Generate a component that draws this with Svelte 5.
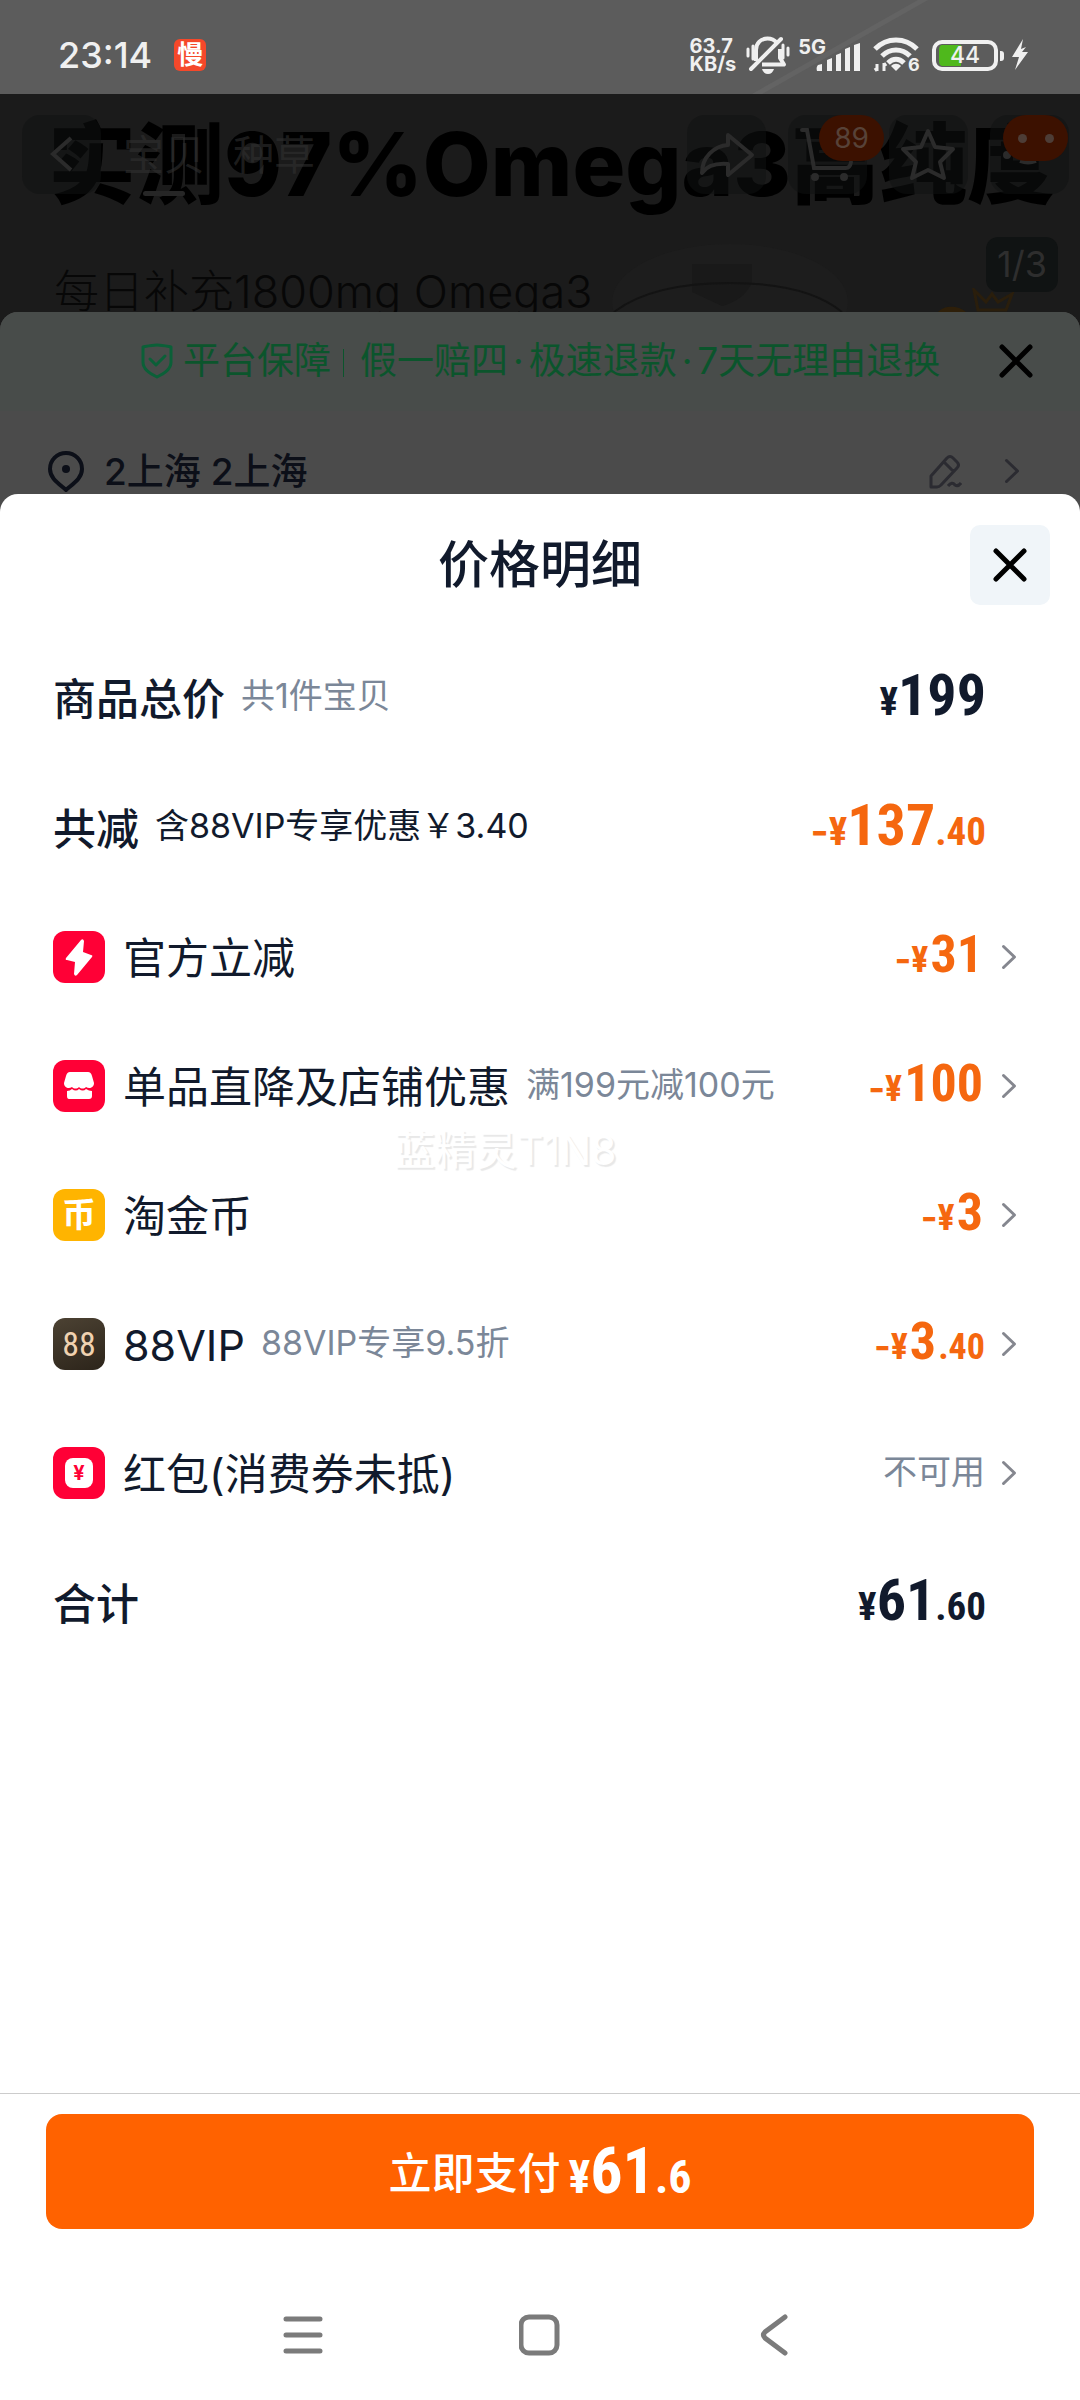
<script lang="ts">
	type Item = {
		icon: 'flash' | 'shop' | 'coin' | 'vip' | 'packet';
		title: string;
		note?: string;
		whole?: string;
		cents?: string;
		unavailable?: string;
	};

	const items: Item[] = [
		{ icon: 'flash', title: '官方立减', whole: '31' },
		{ icon: 'shop', title: '单品直降及店铺优惠', note: '满199元减100元', whole: '100' },
		{ icon: 'coin', title: '淘金币', whole: '3' },
		{ icon: 'vip', title: '88VIP', note: '88VIP专享9.5折', whole: '3', cents: '.40' },
		{ icon: 'packet', title: '红包(消费券未抵)', unavailable: '不可用' }
	];
</script>

{#snippet chevron()}
	<svg class="chevron" viewBox="0 0 16 26" width="16" height="26" aria-hidden="true">
		<path d="M2.5 2.5 13.5 13 2.5 23.5" />
	</svg>
{/snippet}

{#snippet cross()}
	<svg class="cross" viewBox="0 0 36 36" width="36" height="36" aria-hidden="true">
		<path d="M4 4 32 32M32 4 4 32" />
	</svg>
{/snippet}

{#snippet amount(whole: string, cents = '', minus = false)}
	<span class="amount">
		{#if minus}<span class="minus">-</span>{/if}<span class="yen">¥</span><span class="whole"
			>{whole}</span
		>{#if cents}<span class="cents">{cents}</span>{/if}
	</span>
{/snippet}

<div class="page">
	<header class="status">
		<svg class="streak" viewBox="0 0 200 94" width="200" height="94" aria-hidden="true">
			<path d="M10 98 190 -4" />
		</svg>
		<time>23:14</time>
		<span class="app">慢</span>
		<span class="spacer"></span>
		<span class="speed">63.7<br />KB/s</span>
		<svg class="bell" viewBox="0 0 44 38" width="44" height="38" aria-hidden="true">
			<g fill="none" stroke="#f0f0f0" stroke-width="4">
				<path d="M10 25V14C10 7 15 2.500 21.500 2.500c4 0 7 1.500 9 4" />
				<path d="M34 13v9l4 6.500H16" stroke-linejoin="round" />
				<path d="M5 33 35 3" stroke-linecap="round" />
				<path d="M2 13v7M7 10v13M37 9v13M42 12v7" stroke-width="3" stroke-linecap="round" />
			</g>
			<path d="M16 33h12c-1 3-3 5-6 5s-5-2-6-5Z" fill="#f0f0f0" />
		</svg>
		<span class="cell">
			<b>5G</b>
			<svg viewBox="0 0 44 28" width="44" height="28" aria-hidden="true">
				<path
					fill="#f0f0f0"
					d="M2 22l4-1v7H1c-1-3 0-5 1-6ZM11 17l5-2v13h-5ZM20 12l5-2v18h-5ZM29 6l5-2v24h-5ZM38 2l6-2v28h-6Z"
				/>
			</svg>
		</span>
		<svg class="wifi" viewBox="0 0 48 36" width="48" height="36" aria-hidden="true">
			<g fill="none" stroke="#f0f0f0" stroke-width="5">
				<path d="M2 12C14 0 32 0 44 12" />
				<path d="M9 19c8-8 20-8 28 0" />
				<path d="M15 26c5-5 11-5 16 0" />
				<path d="M4 34v-7M11 26v8M2 31l2 3M13 29l-2-3" stroke-width="3" />
			</g>
			<path d="m23 34-5-5c3-3 7-3 10 0Z" fill="#f0f0f0" />
			<text x="35" y="34" font-size="18">6</text>
		</svg>
		<span class="battery"><span>44</span></span>
		<svg class="bolt" viewBox="0 0 18 32" width="18" height="32" aria-hidden="true">
			<path d="M12 0 1 18h7L4 31 17 13h-6l4-5-5 2Z" fill="#f0f0f0" />
		</svg>
	</header>

	<main>
		<section class="hero">
			<svg class="bottle" viewBox="0 0 240 72" width="240" height="72" aria-hidden="true">
				<ellipse cx="120" cy="62" rx="118" ry="58" fill="#1d1d1d" />
				<path d="M82 24h60v18c-6 14-16 20-30 24l-30-14Z" fill="#191919" />
				<path d="M4 72C30 52 70 43 120 43s88 9 112 29" fill="none" stroke="#131313" stroke-width="2" />
			</svg>
			<svg class="crown" viewBox="0 0 80 24" width="80" height="24" aria-hidden="true">
				<path d="M0 24c6-7 20-7 28 0Z" fill="#2e1f09" />
				<path d="m36 2 4 20h28l6-16-14 8-6-8-6 8Z" fill="none" stroke="#2a1e0c" stroke-width="3" />
			</svg>
			<h2>实测97%Omega3高纯度</h2>
			<p>每日补充1800mg Omega3</p>
			<nav class="tools">
				<button class="tool" aria-label="返回">
					<svg viewBox="0 0 79 79" width="79" height="79"><path d="M49 23 31 39 49 55" /></svg>
				</button>
				<a class="tab current" href="#item">宝贝</a>
				<a class="tab" href="#posts">种草</a>
				<span class="spacer"></span>
				<button class="tool" aria-label="分享">
					<svg viewBox="0 0 79 79" width="79" height="79">
						<path
							d="M41 20 65 40 41 60V49C28 48 19 52 15 58 15 42 27 31 41 30Z"
							stroke-linejoin="round"
						/>
					</svg>
				</button>
				<button class="tool" aria-label="购物车">
					<svg viewBox="0 0 79 79" width="79" height="79">
						<path d="M14 15h5l7 38h32q4 0 5-6" stroke-linecap="round" />
						<circle cx="27" cy="62" r="2" /><circle cx="56" cy="62" r="2" />
					</svg>
					<span class="badge">89</span>
				</button>
				<button class="tool" aria-label="收藏">
					<svg viewBox="0 0 79 79" width="79" height="79">
						<path
							d="m39 16 7 16 18 2-13 13 4 16-16-8-16 8 4-16-13-13 18-2Z"
							stroke-linejoin="round"
						/>
					</svg>
				</button>
				<button class="tool" aria-label="更多">
					<svg viewBox="0 0 79 79" width="79" height="79">
						<circle class="dot" cx="17" cy="40" r="2" />
						<path d="M30 46q8 3 16 0" />
					</svg>
					<span class="badge dots"><i></i><i></i></span>
				</button>
			</nav>
			<span class="pager">1/3</span>
		</section>

		<section class="order">
			<div class="promise">
				<p>
					<svg viewBox="0 0 32 36" width="32" height="36" aria-hidden="true">
						<path d="M16 2c5 0 9 1 14 2v15c0 7-6 11-14 15C8 30 2 26 2 19V4c5-1 9-2 14-2Z" />
						<path d="m9 16 6 6 9-9" />
					</svg>
					<span>平台保障</span>
					<i></i>
					<span>假一赔四<b>·</b>极速退款<b>·</b>7天无理由退换</span>
				</p>
				<button aria-label="关闭订单">{@render cross()}</button>
			</div>
			<div class="address">
				<svg viewBox="0 0 38 42" width="38" height="42" aria-hidden="true">
					<path
						d="M19 3C10 3 3 10 3 19c0 9 8 14 16 21 8-7 16-12 16-21 0-9-7-16-16-16Z"
						fill="none"
						stroke="#0c0f18"
						stroke-width="4"
					/>
					<circle cx="19" cy="19" r="4" fill="#0c0f18" />
				</svg>
				<strong>2上海 2上海</strong>
				<button aria-label="修改地址">
					<svg viewBox="0 0 34 36" width="34" height="36">
						<path
							d="M3 23 19 5q3-3 6 0l4 4q3 3 0 6L13 32q-2 2-4 2H3Zm13-14 9 9M20 33q4-5 7-1 3 2 6-2"
							fill="none"
							stroke="#2b2b31"
							stroke-width="3"
							stroke-linejoin="round"
						/>
					</svg>
				</button>
				{@render chevron()}
			</div>
		</section>

		<section class="detail">
			<header>
				<h1>价格明细</h1>
				<button aria-label="关闭">{@render cross()}</button>
			</header>

			<div class="list">
				<div class="row sum">
					<strong>商品总价</strong>
					<small>共1件宝贝</small>
					{@render amount('199')}
				</div>
				<div class="row sum off">
					<strong>共减</strong>
					<small class="dark">含88VIP专享优惠￥3.40</small>
					{@render amount('137', '.40', true)}
				</div>

				{#each items as item}
					<button class="row item off">
						<span class="icon {item.icon}">
							{#if item.icon === 'flash'}
								<svg viewBox="0 0 52 52" width="52" height="52">
									<path
										d="M28 9 13 27q-1 2 1 2l8 2-1 12q1 3 3 1l15-18q1-2-1-2l-8-3 1-11q-1-3-3-1Z"
										fill="#fff"
									/>
								</svg>
							{:else if item.icon === 'shop'}
								<svg viewBox="0 0 52 52" width="52" height="52">
									<path
										d="M17 12h18q3 0 4 4l2 7c0 5-5 6-8 4-2 2-5 2-7 0-2 2-5 2-7 0-3 2-8 1-8-4l2-7q1-4 4-4Z"
										fill="#fff"
									/>
									<path
										d="M14 31q3 0 5-2 4 3 7 0 4 3 7 0 3 2 6 2v5q0 3-3 3H16q-2 0-2-3Z"
										fill="#fff"
									/>
								</svg>
							{:else if item.icon === 'coin'}
								币
							{:else if item.icon === 'vip'}
								88
							{:else}
								<b>¥</b>
							{/if}
						</span>
						<span class="title">{item.title}</span>
						{#if item.note}<small>{item.note}</small>{/if}
						{#if item.whole}
							{@render amount(item.whole, item.cents, true)}
						{:else}
							<small class="end">{item.unavailable}</small>
						{/if}
						{@render chevron()}
					</button>
				{/each}

				<div class="row sum">
					<strong>合计</strong>
					{@render amount('61', '.60')}
				</div>
				<span class="watermark" aria-hidden="true">蓝精灵T1N8</span>
			</div>

			<footer>
				<button class="pay"><span>立即支付</span>{@render amount('61', '.6')}</button>
			</footer>
		</section>
	</main>

	<nav class="keys">
		<button aria-label="菜单">
			<svg viewBox="0 0 40 42" width="40" height="42">
				<path d="M3 5h34M3 21h34M3 37h34" />
			</svg>
		</button>
		<button aria-label="主页">
			<svg viewBox="0 0 42 42" width="42" height="42">
				<rect x="2" y="3" width="36" height="36" rx="8" />
			</svg>
		</button>
		<button aria-label="后退">
			<svg viewBox="0 0 40 42" width="40" height="42">
				<path d="M28 3 8 18q-3 3 0 6l20 15" />
			</svg>
		</button>
	</nav>
</div>

<style>
	:global(body) {
		margin: 0;
		background: #fff;
	}

	.page {
		display: flex;
		flex-direction: column;
		min-height: 100vh;
		background: #fff;
		color: #111a2c;
		font-family: Inter, 'Noto Sans CJK SC', sans-serif;
		font-size: 43px;
		line-height: 1;
	}

	button {
		padding: 0;
		border: 0;
		background: none;
		color: inherit;
		font: inherit;
		cursor: pointer;
	}

	svg {
		display: block;
		flex: none;
	}

	h1,
	h2,
	p {
		margin: 0;
		font-weight: 500;
	}

	.spacer {
		flex: 1;
	}

	/* status bar */
	.status {
		position: relative;
		display: flex;
		align-items: center;
		box-sizing: border-box;
		height: 94px;
		padding: 16px 51px 0 58px;
		background: #5c5c5c;
		color: #f0f0f0;
	}

	.streak {
		position: absolute;
		top: 0;
		right: 140px;
		fill: none;
		stroke: #636363;
		stroke-width: 5;
	}

	time {
		font-size: 36px;
		font-weight: 500;
	}

	.app {
		margin-left: 22px;
		width: 32px;
		border-radius: 6px;
		background: #f5482a;
		color: #fff;
		font-size: 26px;
		font-weight: 700;
		line-height: 32px;
		text-align: center;
	}

	.speed {
		position: relative;
		font-size: 20px;
		font-weight: 700;
		line-height: 18px;
	}

	.bell {
		position: relative;
		margin-left: 10px;
	}

	.cell {
		display: flex;
		align-items: flex-end;
		margin-left: 8px;
	}

	.cell b {
		align-self: flex-start;
		margin-right: -10px;
		font-size: 20px;
		line-height: 16px;
	}

	.cell svg {
		margin-top: 4px;
	}

	.wifi {
		margin-left: 13px;
		fill: #f0f0f0;
		font-weight: 700;
	}

	.battery {
		position: relative;
		box-sizing: border-box;
		width: 66px;
		height: 31px;
		margin: 0 13px 0 11px;
		border: 4px solid #f0f0f0;
		border-radius: 10px;
		background: linear-gradient(90deg, #4fb81c 22px, transparent 22px) content-box;
		padding: 1px 3px;
		font-size: 23px;
		font-weight: 500;
		line-height: 21px;
		text-align: center;
	}

	.battery::after {
		position: absolute;
		top: 7px;
		right: -10px;
		width: 4px;
		height: 10px;
		border-radius: 0 3px 3px 0;
		background: #f0f0f0;
		content: '';
	}

	/* dimmed product page */
	main {
		display: flex;
		flex: 1;
		flex-direction: column;
		background: #1b1b1b;
	}

	.hero {
		position: relative;
		height: 218px;
		overflow: hidden;
		white-space: nowrap;
	}

	.hero h2 {
		padding: 20px 0 0 48px;
		color: #000;
		font-size: 88px;
		font-weight: 800;
		line-height: 100px;
	}

	.hero p {
		padding: 48px 0 0 54px;
		color: #070707;
		font-size: 45px;
		font-weight: 300;
		line-height: 60px;
	}

	.bottle {
		position: absolute;
		bottom: 0;
		left: 610px;
	}

	.crown {
		position: absolute;
		right: 62px;
		bottom: 0;
	}

	.tools {
		position: absolute;
		inset: 21px 11px auto 22px;
		display: flex;
		align-items: center;
		gap: 22px;
	}

	.tool {
		position: relative;
		width: 79px;
		height: 79px;
		border-radius: 18px;
		background: rgba(15, 18, 18, 0.5);
		fill: none;
		stroke: #2b2b2b;
		stroke-width: 4;
	}

	.tab {
		position: relative;
		color: rgba(48, 48, 48, 0.6);
		font-size: 41px;
		line-height: 50px;
		text-decoration: none;
	}

	.tab:nth-of-type(2) {
		margin-left: 6px;
	}

	.current::after {
		position: absolute;
		right: 20px;
		bottom: -16px;
		left: 20px;
		height: 5px;
		border-radius: 3px;
		background: #262626;
		content: '';
	}

	.badge {
		position: absolute;
		top: 0;
		left: 31px;
		display: flex;
		align-items: center;
		justify-content: center;
		width: 65px;
		height: 46px;
		border-radius: 23px;
		background: #3c1100;
		color: #574238;
		font-size: 28px;
	}

	.dots {
		left: 13px;
		gap: 18px;
	}

	.dots i {
		width: 9px;
		height: 9px;
		border-radius: 50%;
		background: #4d3d36;
	}

	.pager {
		position: absolute;
		top: 143px;
		right: 22px;
		width: 72px;
		border-radius: 12px;
		background: #101313;
		color: #2e2e2e;
		font-size: 36px;
		line-height: 55px;
		text-align: center;
	}

	/* dimmed order sheet */
	.order {
		overflow: hidden;
		border-radius: 18px 18px 0 0;
		background: #4b4b4b;
	}

	.promise {
		display: flex;
		align-items: center;
		height: 99px;
		padding: 0 46px 2px 141px;
		box-sizing: border-box;
		background: #484c4a;
		color: #0b552c;
		font-size: 37px;
	}

	.promise p {
		display: flex;
		flex: 1;
		align-items: center;
		font-weight: 400;
		white-space: nowrap;
	}

	.promise p svg {
		margin-right: 10px;
		fill: none;
		stroke: #0b6038;
		stroke-width: 3;
		stroke-linecap: round;
		stroke-linejoin: round;
	}

	.promise b {
		margin: 0 5px;
		font-weight: 400;
	}

	.promise i {
		width: 1px;
		height: 28px;
		margin: 4px 16px 0 12px;
		background: #0b552c;
	}

	.address {
		display: flex;
		align-items: center;
		height: 120px;
		padding: 0 60px 0 47px;
		color: #0c0f18;
		font-size: 37px;
	}

	.address strong {
		flex: 1;
		margin-left: 19px;
		font-weight: 500;
	}

	.address button {
		margin-right: 42px;
	}

	.address .chevron {
		stroke: #2b2b31;
	}

	.chevron {
		fill: none;
		stroke: #85878f;
		stroke-width: 3;
		stroke-linecap: round;
		stroke-linejoin: round;
	}

	.cross {
		margin: auto;
		fill: none;
		stroke: #000;
		stroke-width: 5;
		stroke-linecap: round;
	}

	/* price sheet */
	.detail {
		position: relative;
		display: flex;
		flex: 1;
		flex-direction: column;
		margin-top: -37px;
		border-radius: 18px 18px 0 0;
		background: #fff;
	}

	.detail > header {
		display: grid;
		grid-template-columns: 1fr auto 1fr;
		align-items: center;
		padding: 31px 30px 27px;
	}

	.detail h1 {
		grid-column: 2;
		font-size: 51px;
		line-height: 60px;
	}

	.detail > header button {
		justify-self: end;
		width: 80px;
		height: 80px;
		border-radius: 10px;
		background: #f0f5f9;
	}

	.list {
		position: relative;
	}

	.row {
		display: flex;
		align-items: center;
		box-sizing: border-box;
		width: 100%;
		height: 130px;
		padding: 0 63px 0 53px;
		text-align: left;
		white-space: nowrap;
	}

	.item {
		height: 129px;
	}

	.sum {
		padding-right: 94px;
	}

	.row strong,
	.title {
		padding-top: 4px;
		font-weight: 500;
	}

	.title {
		margin-left: 18px;
		font-weight: 400;
	}

	.row small {
		margin: 0 0 2px 16px;
		color: #7b8798;
		font-size: 34px;
	}

	.row small.dark {
		color: #111a2c;
	}

	.row small.end {
		margin-left: auto;
	}

	.row .chevron {
		margin-left: 16px;
	}

	.icon {
		display: flex;
		align-items: center;
		justify-content: center;
		width: 52px;
		height: 52px;
		border-radius: 12px;
		background: #ff0036;
		color: #fff;
	}

	.coin {
		background: #ffb400;
		font-size: 34px;
		font-weight: 700;
	}

	.vip {
		background: linear-gradient(160deg, #4c4233, #2c241a);
		color: #f0d2b0;
		font-family: 'Roboto Condensed', 'Liberation Sans Narrow', Roboto, sans-serif;
		font-size: 34px;
	}

	.packet b {
		width: 28px;
		border-radius: 8px;
		background: #fff;
		color: #ff0036;
		font-size: 20px;
		line-height: 30px;
		text-align: center;
	}

	.amount {
		display: flex;
		align-items: baseline;
		margin-left: auto;
		padding-bottom: 4px;
		font-family: 'Roboto Condensed', 'Liberation Sans Narrow', Roboto, sans-serif;
		font-size: 36px;
		font-weight: 700;
	}

	.off .amount {
		color: #f5670f;
	}

	.minus {
		font-family: Inter, sans-serif;
	}

	.item .yen,
	.item .whole {
		margin-right: 2px;
	}

	.whole {
		font-size: 52px;
	}

	.sum .amount {
		font-size: 39px;
	}

	.sum .whole {
		font-size: 58px;
	}

	.watermark {
		position: absolute;
		top: 498px;
		left: 394px;
		color: #fff;
		font-size: 41px;
		text-shadow: 2px 2px 1px #e8e8e8;
	}

	.detail footer {
		margin-top: auto;
		padding: 20px 46px 0;
		border-top: 1px solid #ccc;
	}

	.pay {
		display: flex;
		align-items: center;
		justify-content: center;
		gap: 8px;
		width: 100%;
		height: 115px;
		padding-top: 4px;
		border-radius: 16px;
		background: #ff6200;
		color: #fff;
		font-weight: 500;
	}

	.pay .amount {
		margin: 0;
		font-size: 46px;
	}

	.pay .whole {
		font-size: 64px;
	}

	/* system keys */
	.keys {
		display: flex;
		align-items: center;
		justify-content: center;
		gap: 196px;
		padding: 85px 0 44px;
		fill: none;
		stroke: #7b7b7b;
		stroke-width: 5;
		stroke-linecap: round;
	}
</style>
